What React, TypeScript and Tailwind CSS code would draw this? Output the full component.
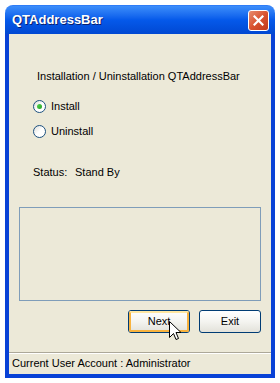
import React, { useState } from 'react';

const font = { fontFamily: '"Liberation Sans", Arial, sans-serif' };

const Radio = ({ checked, label, onClick }: { checked: boolean; label: string; onClick: () => void }) => (
  <label className="flex items-center h-[13px] cursor-default" onClick={onClick}>
    <span className="relative w-[13px] h-[13px] rounded-full border border-[#1c5180] bg-gradient-to-br from-[#dcdcd7] via-white to-white flex items-center justify-center">
      {checked && (
        <span className="w-[5px] h-[5px] rounded-full bg-gradient-to-br from-[#55d551] to-[#21a121]" />
      )}
    </span>
    <span className="ml-[5px] text-[11px] text-black leading-none">{label}</span>
  </label>
);

const XpButton = ({ children, focused = false }: { children: React.ReactNode; focused?: boolean }) => (
  <button
    className="relative w-[62px] h-[23px] rounded-[3px] border border-[#003c74] bg-gradient-to-b from-white via-[#f4f4f0] to-[#e3e2da] text-[11px] text-black"
  >
    {focused && (
      <span className="absolute inset-0 rounded-[2px] border-2 border-[#f8b33f] border-t-[#ffe7a2]" />
    )}
    <span className="relative">{children}</span>
  </button>
);

export default function App() {
  const [mode, setMode] = useState<'install' | 'uninstall'>('install');

  return (
    <div className="w-[280px] h-[383px] bg-white overflow-hidden" style={font}>
      <div className="relative ml-[5px] mt-[5px] w-[270px] h-[373px] flex flex-col">
        {/* Title bar */}
        <div className="h-[29px] rounded-t-[8px] bg-gradient-to-b from-[#3c8dfa] via-[#0559ea] to-[#0148d2] border-t border-[#2e7cf7] flex items-center justify-between pl-[7px] pr-[6px]">
          <span className="text-white font-bold text-[13px] [text-shadow:1px_1px_0_#0a1f6e]">QTAddressBar</span>
          <span className="w-[21px] h-[21px] rounded-[3px] border border-white bg-gradient-to-br from-[#e78c6e] via-[#d9532f] to-[#c0391b] flex items-center justify-center">
            <svg width="11" height="11" viewBox="0 0 11 11">
              <path d="M1.5 1.5 L9.5 9.5 M9.5 1.5 L1.5 9.5" stroke="white" strokeWidth="2.2" strokeLinecap="square" />
            </svg>
          </span>
        </div>

        {/* Body */}
        <div className="flex-1 flex flex-col bg-[#ece9d8] border-x-4 border-b-4 border-[#0841d6]">
          <p className="mt-[36px] ml-[28px] text-[11px] leading-[13px] text-black">
            Installation / Uninstallation QTAddressBar
          </p>

          <div className="mt-[17px] ml-[24px] flex flex-col gap-[12px]">
            <Radio checked={mode === 'install'} label="Install" onClick={() => setMode('install')} />
            <Radio checked={mode === 'uninstall'} label="Uninstall" onClick={() => setMode('uninstall')} />
          </div>

          <div className="mt-[28px] ml-[24px] flex text-[11px] leading-[13px] text-black">
            <span className="w-[42px]">Status:</span>
            <span>Stand By</span>
          </div>

          <div className="mt-[28px] ml-[10px] w-[242px] h-[94px] border border-[#7f9db9]" />

          <div className="mt-[9px] ml-[119px] flex gap-[9px]">
            <XpButton focused>Next</XpButton>
            <XpButton>Exit</XpButton>
          </div>

          <div className="mt-auto border-t border-[#aca899] shadow-[inset_0_1px_0_white] h-[22px] flex items-center pl-[3px] text-[11px] text-black">
            Current User Account : Administrator
          </div>
        </div>

        {/* Mouse cursor */}
        <svg className="absolute left-[164px] top-[316px]" width="13" height="21" viewBox="0 0 13 21">
          <path d="M0.5 0.5 L0.5 16.5 L4.5 12.5 L7 18.5 L9.5 17.5 L7 11.5 L12 11.5 Z" fill="white" stroke="black" strokeWidth="1" strokeLinejoin="miter" />
        </svg>
      </div>
    </div>
  );
}
